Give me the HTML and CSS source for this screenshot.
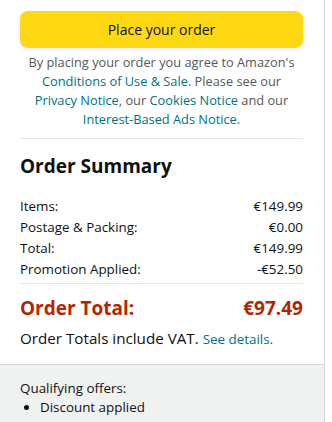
FILE: index.html
```html
<!DOCTYPE html>
<html>
<head>
<meta charset="utf-8">
<link rel="stylesheet" href="styles.css">
</head>
<body>
<div class="card">
  <div class="top">
    <button class="place">Place your order</button>
    <p class="legal">By placing your order you agree to Amazon's <a>Conditions of Use &amp; Sale</a>. Please see our <a>Privacy Notice</a>, our <a>Cookies Notice</a> and our <a>Interest-Based Ads Notice</a>.</p>
  </div>
  <div class="summary">
    <h2 class="title">Order Summary</h2>
    <div class="rows">
      <div class="row"><span>Items:</span><span>€149.99</span></div>
      <div class="row"><span>Postage &amp; Packing:</span><span>€0.00</span></div>
      <div class="row"><span>Total:</span><span>€149.99</span></div>
      <div class="row"><span>Promotion Applied:</span><span>-€52.50</span></div>
    </div>
    <div class="total"><span>Order Total:</span><span>€97.49</span></div>
    <p class="vat">Order Totals include VAT. <a>See details.</a></p>
  </div>
  <div class="offers">
    <div>Qualifying offers:</div>
    <ul class="list"><li>Discount applied</li></ul>
  </div>
</div>
</body>
</html>
```

FILE: styles.css
```css
html, body {
  margin: 0;
  padding: 0;
  background: #fff;
}
body {
  font-family: "Open Sans", "Noto Sans", sans-serif;
  color: #0f1111;
}
.card {
  width: 324px;
  height: 422px;
  border-right: 1px solid #d5d9d9;
  display: flex;
  flex-direction: column;
}
.top {
  padding: 11px 21px 0 20px;
}
.place {
  display: block;
  width: 100%;
  height: 37px;
  border: 0;
  border-radius: 8px;
  background: #ffd814;
  box-shadow: 0 2px 5px rgba(213, 217, 217, 0.5);
  font-family: inherit;
  font-size: 14px;
  color: #0f1111;
  padding: 0;
}
.legal {
  margin: 5px 0 0 0;
  padding-bottom: 9px;
  border-bottom: 1px solid #e7e7e7;
  text-align: center;
  font-size: 12.8px;
  line-height: 19px;
  color: #565959;
}
.legal a, .vat a {
  color: #007185;
  text-decoration: none;
}
.summary {
  padding: 0 21px 0 20px;
}
.title {
  margin: 15px 0 0 0;
  font-size: 19px;
  line-height: 24px;
  font-weight: 700;
}
.rows {
  margin-top: 18px;
  padding-bottom: 3px;
  border-bottom: 1px solid #e7e7e7;
}
.row {
  display: flex;
  justify-content: space-between;
  font-size: 13.4px;
  line-height: 21px;
}
.total {
  display: flex;
  justify-content: space-between;
  margin-top: 12px;
  font-size: 19px;
  line-height: 24px;
  font-weight: 700;
  color: #b12704;
}
.vat {
  margin: 7px 0 0 0;
  font-size: 15.2px;
  line-height: 22px;
}
.vat a {
  font-size: 13.4px;
}
.offers {
  margin-top: 14px;
  flex: 1;
  background: #f0f2f2;
  border-top: 1px solid #d5d9d9;
  padding: 14px 20px 0 20px;
  font-size: 13.4px;
  line-height: 19px;
}
.list {
  margin: 0;
  padding-left: 20px;
}
```
